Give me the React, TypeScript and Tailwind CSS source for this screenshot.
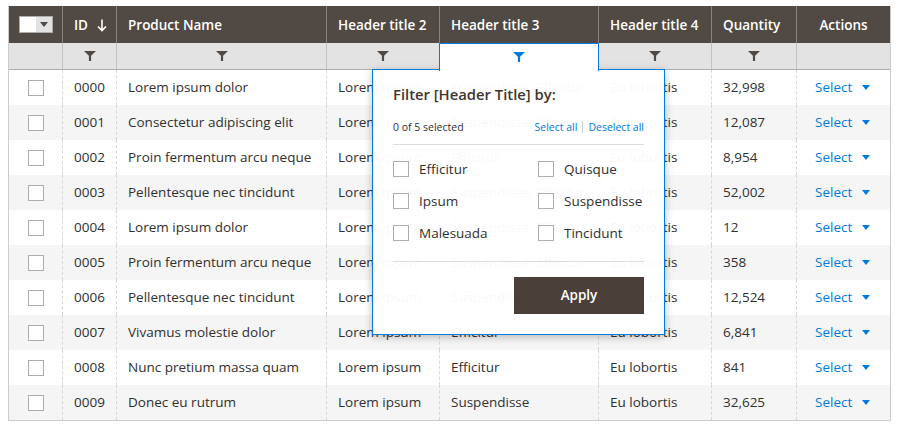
import React from "react";

const rows = [
  ["0000", "Lorem ipsum dolor", "Suspendisse, Efficitur", "32,998"],
  ["0001", "Consectetur adipiscing elit", "Suspendisse, Efficitur", "12,087"],
  ["0002", "Proin fermentum arcu neque", "Efficitur", "8,954"],
  ["0003", "Pellentesque nec tincidunt", "Suspendisse, Efficitur", "52,002"],
  ["0004", "Lorem ipsum dolor", "Suspendisse, Efficitur", "12"],
  ["0005", "Proin fermentum arcu neque", "Suspendisse, Efficitur", "358"],
  ["0006", "Pellentesque nec tincidunt", "Suspendisse", "12,524"],
  ["0007", "Vivamus molestie dolor", "Efficitur", "6,841"],
  ["0008", "Nunc pretium massa quam", "Efficitur", "841"],
  ["0009", "Donec eu rutrum", "Suspendisse", "32,625"],
];

const widths = ["w-[53px]", "w-[54px]", "w-[210px]", "w-[113px]", "w-[159px]", "w-[113px]", "w-[85px]", "w-[94px]"];

function Funnel({ color = "#514943" }: { color?: string }) {
  return (
    <svg width="12" height="10" viewBox="0 0 12 10">
      <path d="M0 0H12L7.1 4.8V10H4.9V4.8Z" fill={color} />
    </svg>
  );
}

function Caret({ color }: { color: string }) {
  return (
    <svg width="8" height="5" viewBox="0 0 8 5">
      <path d="M0 0H8L4 5Z" fill={color} />
    </svg>
  );
}

function Box() {
  return <span className="block w-4 h-4 bg-white border border-[#adadad]" />;
}

const headers = ["ID", "Product Name", "Header title 2", "Header title 3", "Header title 4", "Quantity", "Actions"];

export default function App() {
  return (
    <div
      className="bg-white w-[913px] h-[431px] pt-[6px] pl-[8px] text-[13.5px] text-[#303030]"
      style={{ fontFamily: '"Open Sans", sans-serif' }}
    >
      <div className="relative w-[883px] border-r border-b border-l border-[#cccccc]">
        {/* header */}
        <div className="flex h-[37px] bg-[#514943] text-white font-semibold">
          <div className={`${widths[0]} shrink-0 flex items-center justify-center`}>
            <div className="flex border border-[#adadad]">
              <span className="block w-[16px] h-[15px] bg-white" />
              <span className="flex items-center justify-center w-[16px] h-[15px] bg-[#e3e3e3]">
                <Caret color="#514943" />
              </span>
            </div>
          </div>
          {headers.map((h, i) => (
            <div
              key={h}
              className={`${widths[i + 1]} shrink-0 flex items-center pt-[2px] border-l border-[#8a837f] ${
                h === "Actions" ? "justify-center" : "pl-[11px]"
              }`}
            >
              {h}
              {h === "ID" && (
                <svg className="ml-[9px]" width="10" height="13" viewBox="0 0 10 13">
                  <path d="M5 0.5V11.5M1 7.5L5 11.5L9 7.5" stroke="white" strokeWidth="1.6" fill="none" />
                </svg>
              )}
            </div>
          ))}
        </div>
        {/* filters */}
        <div className="flex h-[27px] bg-[#e3e3e3] border-b border-[#adadad]">
          {widths.map((w, i) => (
            <div
              key={i}
              className={`${w} shrink-0 flex items-center justify-center ${i > 0 ? "border-l border-[#c2c2c2]" : ""}`}
            >
              {i > 0 && i < 7 && i !== 4 && <Funnel />}
            </div>
          ))}
        </div>
        {/* body */}
        {rows.map((r, ri) => (
          <div key={r[0]} className={`flex h-[35px] ${ri % 2 ? "bg-[#f5f5f5]" : "bg-white"}`}>
            <div className={`${widths[0]} shrink-0 flex items-center justify-center`}>
              <Box />
            </div>
            {[r[0], r[1], "Lorem ipsum", r[2], "Eu lobortis", r[3]].map((c, ci) => (
              <div
                key={ci}
                className={`${widths[ci + 1]} shrink-0 flex items-center pl-[11px] border-l border-dashed border-[#d6d6d6] whitespace-nowrap overflow-hidden`}
              >
                {c}
              </div>
            ))}
            <div className={`${widths[7]} shrink-0 flex items-center pl-[18px] gap-[10px] border-l border-dashed border-[#d6d6d6] text-[#007bdb]`}>
              Select
              <Caret color="#007bdb" />
            </div>
          </div>
        ))}

        {/* active filter tab */}
        <div className="absolute left-[430px] top-[37px] w-[160px] h-[28px] z-20 bg-white border-t border-l border-r border-[#007bdb] flex justify-center pt-[8px]">
          <Funnel color="#007bdb" />
        </div>

        {/* filter popup */}
        <div className="absolute left-[363px] top-[63px] w-[293px] h-[266px] z-10 bg-white/[0.97] border border-[#007bdb] shadow-[0_2px_8px_rgba(0,0,0,0.25)] px-[20px] pt-[13px]">
          <div className="text-[14.8px] font-semibold text-[#41362f] leading-[22px]">Filter [Header Title] by:</div>
          <div className="flex justify-between items-center mt-[15px] text-[10.5px] leading-[14px]">
            <span>0 of 5 selected</span>
            <span className="flex items-center text-[#007bdb]">
              Select all
              <span className="mx-[5px] w-px h-[12px] bg-[#cccccc]" />
              Deselect all
            </span>
          </div>
          <div className="mt-[10px] border-t border-[#dddddd]" />
          <div className="grid grid-cols-[145px_1fr] gap-y-[16px] pt-[16px] pb-[20px]">
            {["Efficitur", "Quisque", "Ipsum", "Suspendisse", "Malesuada", "Tincidunt"].map((l) => (
              <label key={l} className="flex items-center gap-[10px] h-[16px]">
                <Box />
                {l}
              </label>
            ))}
          </div>
          <div className="border-t border-[#dddddd]" />
          <div className="flex justify-end pt-[15px]">
            <button className="w-[130px] h-[37px] bg-[#4a3f39] text-white font-semibold text-[13.5px]">Apply</button>
          </div>
        </div>
      </div>
    </div>
  );
}
